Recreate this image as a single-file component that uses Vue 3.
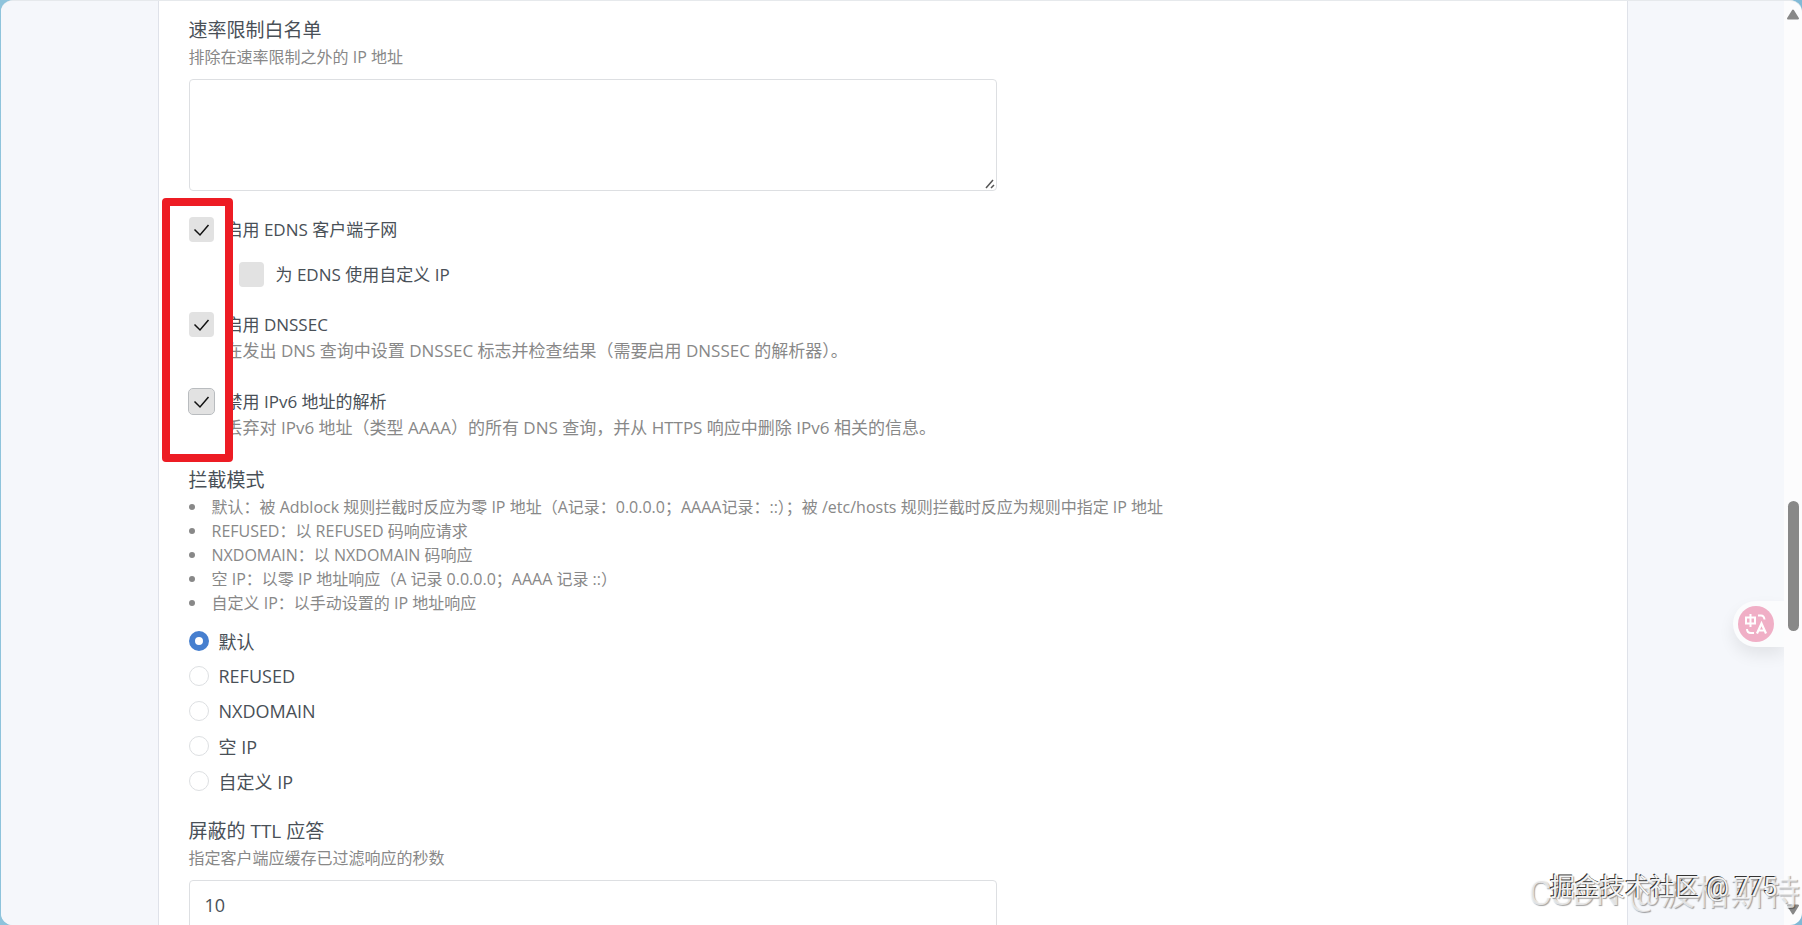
<script setup>
import { ref } from 'vue'

const whitelist = ref('')
const ednsEnabled = ref(true)
const ednsCustom = ref(false)
const dnssec = ref(true)
const disableIpv6 = ref(true)
const mode = ref('default')
const ttl = ref('10')

const modeNotes = [
  '默认：被 Adblock 规则拦截时反应为零 IP 地址（A记录：0.0.0.0；AAAA记录：::）；被 /etc/hosts 规则拦截时反应为规则中指定 IP 地址',
  'REFUSED：以 REFUSED 码响应请求',
  'NXDOMAIN：以 NXDOMAIN 码响应',
  '空 IP：以零 IP 地址响应（A 记录 0.0.0.0；AAAA 记录 ::）',
  '自定义 IP：以手动设置的 IP 地址响应',
]
const modes = [
  { value: 'default', label: '默认' },
  { value: 'refused', label: 'REFUSED' },
  { value: 'nxdomain', label: 'NXDOMAIN' },
  { value: 'null_ip', label: '空 IP' },
  { value: 'custom_ip', label: '自定义 IP' },
]
</script>

<template>
  <div class="window">
    <div class="page">
      <main class="card">
        <section class="group">
          <label class="title" for="whitelist">速率限制白名单</label>
          <p class="desc">排除在速率限制之外的 IP 地址</p>
          <div class="area">
            <textarea id="whitelist" v-model="whitelist" class="field textarea"></textarea>
            <svg class="grip" viewBox="0 0 10 10" aria-hidden="true">
              <path d="M1 9 8 1M6 9 9 6" />
            </svg>
          </div>
        </section>

        <section class="checks">
          <label class="check">
            <input v-model="ednsEnabled" type="checkbox" />
            <span>启用 EDNS 客户端子网</span>
          </label>
          <label class="check nested">
            <input v-model="ednsCustom" type="checkbox" />
            <span>为 EDNS 使用自定义 IP</span>
          </label>
          <label class="check">
            <input v-model="dnssec" type="checkbox" />
            <span>启用 DNSSEC<small>在发出 DNS 查询中设置 DNSSEC 标志并检查结果（需要启用 DNSSEC 的解析器）。</small></span>
          </label>
          <label class="check">
            <input v-model="disableIpv6" class="focused" type="checkbox" />
            <span>禁用 IPv6 地址的解析<small>丢弃对 IPv6 地址（类型 AAAA）的所有 DNS 查询，并从 HTTPS 响应中删除 IPv6 相关的信息。</small></span>
          </label>
          <div class="highlight" aria-hidden="true"></div>
        </section>

        <section class="group" role="radiogroup" aria-labelledby="mode-title">
          <h2 id="mode-title" class="title">拦截模式</h2>
          <ul class="notes">
            <li v-for="note in modeNotes" :key="note">{{ note }}</li>
          </ul>
          <div class="radios">
            <label v-for="item in modes" :key="item.value" class="radio">
              <input v-model="mode" type="radio" name="mode" :value="item.value" />
              <span>{{ item.label }}</span>
            </label>
          </div>
        </section>

        <section class="group">
          <label class="title" for="ttl">屏蔽的 TTL 应答</label>
          <p class="desc">指定客户端应缓存已过滤响应的秒数</p>
          <input id="ttl" v-model="ttl" class="field input" type="text" />
        </section>
      </main>
      <button class="translate" type="button" aria-label="翻译">
        <svg viewBox="0 0 36 36" aria-hidden="true">
          <circle cx="18" cy="18" r="18" fill="#f0afc6" />
          <g fill="none" stroke="#fff" stroke-width="2">
            <path d="M8 11.500h9v6H8zM12.500 8v13" />
            <path d="M20 9.500h3q3 0 3.500 4M9 23q0 4 4 4h3" />
            <path d="M19 27.500l4.500-10 4.500 10M20.500 24.500h6" stroke-width="2.200" />
          </g>
        </svg>
      </button>
    </div>
    <div class="scrollbar" aria-hidden="true">
      <svg class="arrow" viewBox="0 0 14 11"><path d="M7 1.500 12 9.500H2z" /></svg>
      <div class="track"><div class="thumb"></div></div>
      <svg class="arrow" viewBox="0 0 14 11"><path d="M7 9.500 12 1.500H2z" /></svg>
    </div>
    <span class="mark mark-light">CSDN @波格斯特</span>
    <span class="mark mark-dark">掘金技术社区 @ 775</span>
  </div>
</template>

<style>
body {
  background: linear-gradient(100deg, #8fc4dc, #7fb9d6);
}
</style>

<style scoped>
.window {
  position: relative;
  display: flex;
  box-sizing: border-box;
  height: 100vh;
  margin-left: 1px;
  overflow: hidden;
  border-top: 1px solid #e6e9ec;
  border-radius: 12px;
  background: #fcfcfd;
  color: #495057;
  font-family: "Open Sans", "Noto Sans CJK SC", sans-serif;
  font-size: 17px;
}
.page {
  position: relative;
  display: flex;
  flex: 1;
  justify-content: center;
  overflow: hidden;
  background: #f5f7fb;
}
.card {
  box-sizing: border-box;
  width: 100%;
  max-width: 1470px;
  height: max-content;
  padding: 16px 30px;
  border: solid #dfe2e9;
  border-width: 0 1px;
  background: #fff;
}
.title {
  display: block;
  margin: 0;
  font-size: 19px;
  font-weight: 400;
  line-height: 27px;
}
.desc {
  margin: 0 0 8px;
  color: #888;
  font-size: 16px;
  line-height: 27px;
}
.field {
  display: block;
  box-sizing: border-box;
  width: 100%;
  max-width: 808px;
  border: 1px solid #dddfe2;
  border-radius: 4px;
  background: #fff;
  color: #495057;
  font: inherit;
  font-size: 18px;
  outline: none;
}
.area {
  position: relative;
  max-width: 808px;
}
.textarea {
  height: 112px;
  padding: 8px 15px;
  resize: none;
}
.grip {
  position: absolute;
  right: 2px;
  bottom: 2px;
  width: 10px;
  height: 10px;
  fill: none;
  stroke: #555;
  stroke-width: 1.500;
}
.input {
  height: 50px;
  padding: 0 15px;
}
.checks {
  position: relative;
  display: flex;
  flex-direction: column;
  gap: 25px;
  margin: 26px 0;
}
.check {
  display: flex;
  align-items: flex-start;
  gap: 12px;
  line-height: 26px;
}
.check small {
  display: block;
  color: #888;
  font-size: inherit;
}
.nested {
  margin: -6px 0 -1px 50px;
}
.check input {
  flex: none;
  width: 25px;
  height: 25px;
  margin: 0;
  appearance: none;
  border-radius: 4px;
  background: #e2e2e2;
}
.check input:checked {
  background: #e2e2e2 url("data:image/svg+xml,%3Csvg xmlns='http://www.w3.org/2000/svg' viewBox='0 0 25 25'%3E%3Cpath d='M5.500 12.500 11 18 19.500 8' fill='none' stroke='%23111' stroke-width='1.500'/%3E%3C/svg%3E");
}
.check .focused {
  outline: 1px solid #b9bcbf;
}
.highlight {
  position: absolute;
  top: -19px;
  bottom: -21px;
  left: -27px;
  box-sizing: border-box;
  width: 71px;
  border: 8px solid #ed1c24;
  border-radius: 4px;
  pointer-events: none;
}
.notes {
  margin: 1px 0 8px;
  padding: 0;
  color: #888;
  font-size: 16px;
  line-height: 24px;
  list-style: none;
}
.notes li {
  display: flex;
  align-items: center;
  gap: 17px;
}
.notes li::before {
  flex: none;
  width: 6px;
  height: 6px;
  border-radius: 50%;
  background: #888;
  content: "";
}
.radio {
  display: flex;
  align-items: center;
  gap: 10px;
  height: 35px;
  font-size: 18px;
}
.radio input {
  width: 20px;
  height: 20px;
  margin: 0;
  appearance: none;
  border: 1px solid #dddfe2;
  border-radius: 50%;
  background: #fff;
}
.radio input:checked {
  border: 6px solid #467fcf;
}
.radios {
  margin-bottom: 20px;
}
.translate {
  position: absolute;
  right: 0;
  bottom: 278px;
  display: flex;
  padding: 5px 10px 5px 5px;
  border: 0;
  border-radius: 23px 0 0 23px;
  background: #fbfcfd;
  box-shadow: 0 8px 16px rgb(0 0 0 / 8%);
}
.translate svg {
  width: 36px;
  height: 36px;
}
.scrollbar {
  display: flex;
  flex-direction: column;
  align-items: center;
  box-sizing: border-box;
  width: 18px;
  padding: 8px 0 10px;
}
.arrow {
  width: 14px;
  height: 11px;
  fill: #888;
  stroke: #888;
  stroke-width: 2;
  stroke-linejoin: round;
}
.track {
  display: flex;
  flex: 1;
  flex-direction: column;
}
.track::before {
  flex: 548;
  content: "";
}
.track::after {
  flex: 311;
  content: "";
}
.thumb {
  width: 11px;
  height: 130px;
  border-radius: 6px;
  background: #888;
}
.mark {
  position: absolute;
  font-family: Roboto, "Noto Sans CJK SC", sans-serif;
  white-space: nowrap;
  pointer-events: none;
}
.mark-light {
  right: 2px;
  bottom: 7px;
  color: rgb(255 255 255 / 70%);
  font-size: 35px;
  line-height: 48px;
  text-shadow: 1px 1px 1px rgb(0 0 0 / 36%);
}
.mark-dark {
  right: 25px;
  bottom: 19px;
  color: #f4f4f4;
  font-size: 25px;
  line-height: 36px;
  text-shadow: -1px -1px 0 #333, 1px 1px 1px #999;
}
</style>
